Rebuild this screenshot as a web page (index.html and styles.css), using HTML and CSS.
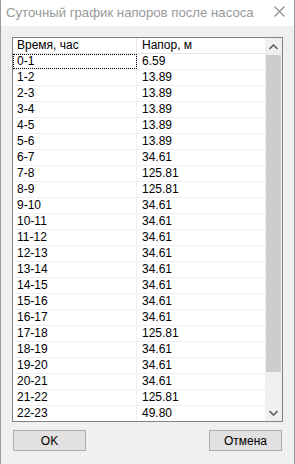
FILE: index.html
```html
<html lang="ru">
<head>
  <meta charset="UTF-8" />
  <title>Суточный график напоров после насоса</title>
  <link rel="stylesheet" href="styles.css">
</head>
<body>

  <div class="window">
    <!-- заголовок окна -->
    <div class="titlebar">
      <span class="title">Суточный график напоров после насоса</span>
      <svg class="close" width="11" height="11" viewBox="0 0 11 11">
        <path d="M0.5 0.5 L10.5 10.5 M10.5 0.5 L0.5 10.5" stroke="#888" stroke-width="1.1" fill="none"/>
      </svg>
    </div>

    <div class="content">
      <div class="grid">
        <div class="rows">
          <div class="row head">
            <div class="cell c1">Время, час</div>
            <div class="cell c2">Напор, м</div>
          </div>
          <div class="row"><div class="cell c1 focus">0-1</div><div class="cell c2">6.59</div></div>
          <div class="row"><div class="cell c1">1-2</div><div class="cell c2">13.89</div></div>
          <div class="row"><div class="cell c1">2-3</div><div class="cell c2">13.89</div></div>
          <div class="row"><div class="cell c1">3-4</div><div class="cell c2">13.89</div></div>
          <div class="row"><div class="cell c1">4-5</div><div class="cell c2">13.89</div></div>
          <div class="row"><div class="cell c1">5-6</div><div class="cell c2">13.89</div></div>
          <div class="row"><div class="cell c1">6-7</div><div class="cell c2">34.61</div></div>
          <div class="row"><div class="cell c1">7-8</div><div class="cell c2">125.81</div></div>
          <div class="row"><div class="cell c1">8-9</div><div class="cell c2">125.81</div></div>
          <div class="row"><div class="cell c1">9-10</div><div class="cell c2">34.61</div></div>
          <div class="row"><div class="cell c1">10-11</div><div class="cell c2">34.61</div></div>
          <div class="row"><div class="cell c1">11-12</div><div class="cell c2">34.61</div></div>
          <div class="row"><div class="cell c1">12-13</div><div class="cell c2">34.61</div></div>
          <div class="row"><div class="cell c1">13-14</div><div class="cell c2">34.61</div></div>
          <div class="row"><div class="cell c1">14-15</div><div class="cell c2">34.61</div></div>
          <div class="row"><div class="cell c1">15-16</div><div class="cell c2">34.61</div></div>
          <div class="row"><div class="cell c1">16-17</div><div class="cell c2">34.61</div></div>
          <div class="row"><div class="cell c1">17-18</div><div class="cell c2">125.81</div></div>
          <div class="row"><div class="cell c1">18-19</div><div class="cell c2">34.61</div></div>
          <div class="row"><div class="cell c1">19-20</div><div class="cell c2">34.61</div></div>
          <div class="row"><div class="cell c1">20-21</div><div class="cell c2">34.61</div></div>
          <div class="row"><div class="cell c1">21-22</div><div class="cell c2">125.81</div></div>
          <div class="row"><div class="cell c1">22-23</div><div class="cell c2">49.80</div></div>
        </div>

        <!-- полоса прокрутки -->
        <div class="scrollbar">
          <div class="arrow">
            <svg width="9" height="6" viewBox="0 0 9 6"><path d="M0.5 5 L4.5 1 L8.5 5" stroke="#606060" stroke-width="1.6" fill="none"/></svg>
          </div>
          <div class="track"><div class="thumb"></div></div>
          <div class="arrow">
            <svg width="9" height="6" viewBox="0 0 9 6"><path d="M0.5 1 L4.5 5 L8.5 1" stroke="#606060" stroke-width="1.6" fill="none"/></svg>
          </div>
        </div>
      </div>

      <div class="buttons">
        <button class="btn">OK</button>
        <button class="btn">Отмена</button>
      </div>
    </div>
  </div>

</body>
</html>
```
FILE: styles.css
```css
body {
  margin: 0;
  font-family: "Liberation Sans", Arial, sans-serif;
  font-size: 12px;
  color: #000;
  background: #f0f0f0;
}

.window {
  width: 295px;
  height: 464px;
  box-sizing: border-box;
  border-left: 1px solid #9a9a9a;
  border-right: 1px solid #9a9a9a;
  background: #f0f0f0;
}

.titlebar {
  height: 26px;
  background: #fff;
  display: flex;
  align-items: center;
  justify-content: space-between;
  padding: 0 9px 0 5px;
}

.title {
  font-family: "Liberation Sans", Arial, sans-serif;
  font-size: 13.2px;
  color: #999;
  white-space: nowrap;
  margin-top: -1px;
}

.close {
  margin-top: -3px;
}

.content {
  padding: 11px 11px 0 11px;
}

.grid {
  display: flex;
  height: 385px;
  box-sizing: border-box;
  border: 1px solid #828282;
  background: #fff;
}

.rows {
  flex: 1;
  overflow: hidden;
}

.row {
  display: flex;
  height: 16px;
  box-sizing: border-box;
  border-bottom: 1px solid #f0f0f0;
}

.row.head {
  border-bottom: 1px solid #e5e5e5;
}

.cell {
  line-height: 15px;
  white-space: nowrap;
}

.c1 {
  width: 124px;
  padding-left: 4px;
  box-sizing: border-box;
  border-right: 1px solid #f0f0f0;
}

.head .c1 {
  border-right-color: #e5e5e5;
}

.c2 {
  flex: 1;
  padding-left: 5px;
}

.focus {
  outline: 1px dotted #000;
  outline-offset: -1px;
}

.scrollbar {
  width: 17px;
  display: flex;
  flex-direction: column;
  background: #f0f0f0;
}

.arrow {
  height: 17px;
  display: flex;
  align-items: center;
  justify-content: center;
}

.track {
  flex: 1;
  padding: 0 1px;
}

.thumb {
  height: 317px;
  background: #cdcdcd;
}

.buttons {
  display: flex;
  justify-content: space-between;
  margin-top: 8px;
  padding: 0 1px;
}

.btn {
  width: 73px;
  height: 21px;
  font-family: "Liberation Sans", Arial, sans-serif;
  font-size: 12px;
  background: #e1e1e1;
  border: 1px solid #adadad;
  padding: 0;
  color: #000;
}
```
